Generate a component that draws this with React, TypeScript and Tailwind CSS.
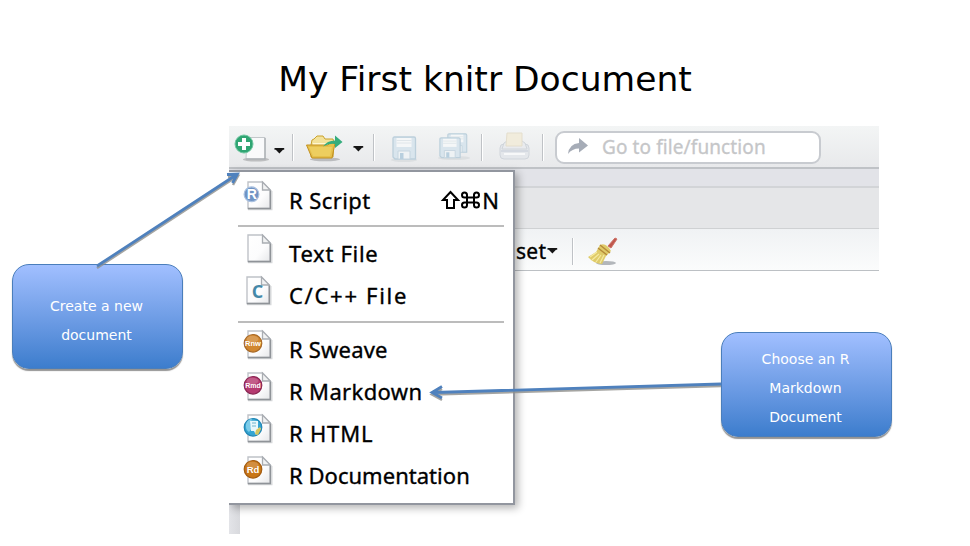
import type { ReactNode } from "react";

type DocKind = "script" | "text" | "c" | "sweave" | "markdown" | "html" | "rd";

function Caret({ className = "" }: { className?: string }) {
  return (
    <svg className={className} width="11" height="8" viewBox="0 0 11 8">
      <path d="M.5 1h9.700v1.800H9L5.400 6.600 1.800 2.800H.5z" fill="#151515" />
    </svg>
  );
}

const badges: Record<DocKind, { fill: string; edge: string; label: string; size: number } | null> = {
  script: { fill: "#6f93c4", edge: "#a9c0df", label: "R", size: 14 },
  text: null,
  c: null,
  sweave: { fill: "#d18730", edge: "#a86a28", label: "Rnw", size: 7.5 },
  markdown: { fill: "#b53a70", edge: "#8b2854", label: "Rmd", size: 7 },
  html: { fill: "#35a5d2", edge: "#2387b5", label: "", size: 9 },
  rd: { fill: "#c97616", edge: "#a45d12", label: "Rd", size: 9.5 },
};

function DocIcon({ kind }: { kind: DocKind }) {
  const b = badges[kind];
  const small = kind === "script";
  return (
    <svg width="32" height="32" viewBox="0 0 32 32" className={kind === "c" ? "-ml-px mr-px" : ""}>
      <defs>
        <linearGradient id="paper" x1="0" y1="0" x2="1" y2="1">
          <stop offset="0" stopColor="#fff" />
          <stop offset=".6" stopColor="#fcfcfd" />
          <stop offset="1" stopColor="#e6e7e9" />
        </linearGradient>
      </defs>
      <path d="M6 29.300h23.500V11" fill="none" stroke="#d6d8da" strokeWidth="2" />
      <path d="M6 2h14.500L28.300 10v18.500H6z" fill="url(#paper)" stroke="#bfc2c8" strokeWidth="1.4" />
      <path d="M6 28.500h22.300V10" fill="none" stroke="#8f9398" strokeWidth="1.4" />
      <path d="M20.500 2v8h7.800z" fill="#f1f2f3" stroke="#a9adb2" strokeWidth="1.3" />
      {b && (
        <>
          <circle cx={small ? 9.5 : 11} cy="14.3" r={small ? 7.4 : 8.8} fill={b.fill} stroke={b.edge} strokeWidth="1.2" />
          {!small && <ellipse cx="10.5" cy="10" rx="6" ry="3.2" fill="#fff" opacity=".18" />}
          <text
            x={small ? 9.8 : 11}
            y={small ? 19.2 : 14.3 + b.size * 0.36}
            textAnchor="middle"
            fontSize={b.size}
            fontWeight="700"
            fill="#fff"
            fontFamily="Liberation Sans, sans-serif"
          >
            {b.label}
          </text>
        </>
      )}
      {kind === "c" && (
        <text x="16.500" y="22.5" textAnchor="middle" fontSize="18" fontWeight="700" fill="#4589a9" fontFamily="Open Sans, sans-serif">
          C
        </text>
      )}
      {kind === "html" && (
        <>
          <path d="M4 11q2-5 6-5l-2 5 2 4-3 4q-4-3-3-8z" fill="#7dcce9" />
          <path d="M8 8h8v7h3l-5 7-2-4H9z" fill="#e8f7fb" />
          <path d="M10 10h4M10 13h4" stroke="#6eb4ce" />
          <path d="m14 17 4-3 1 2-3 6-3-1z" fill="#d5c65f" />
        </>
      )}
    </svg>
  );
}

function NewIcon() {
  return (
    <svg width="36" height="32" viewBox="0 0 36 32">
      <ellipse cx="22" cy="27.500" rx="13" ry="2" fill="#a9abad" opacity=".7" />
      <path d="M13 5.5h18v21.3H12z" fill="#f9fafb" stroke="#c3c7ca" />
      <path d="M12 27h19V6" fill="none" stroke="#a4a9ad" strokeWidth="1.2" />
      <circle cx="10" cy="12" r="9" fill="#30a573" stroke="#71c7a2" />
      <path d="M10 6v12M4 12h12" stroke="#fff" strokeWidth="4" />
    </svg>
  );
}

function OpenIcon() {
  return (
    <svg width="40" height="32" viewBox="0 0 40 32">
      <ellipse cx="20" cy="27.3" rx="15" ry="2" fill="#9b9da0" opacity=".6" />
      <path d="m6 13 1-5 2-1 3-3h6l2 3h8l1 4-1 14H6z" fill="#f3e29a" stroke="#caa22c" />
      <path d="M8 12h18" stroke="#fff8d0" strokeWidth="2" />
      <path d="M1.5 13H23l2-2h5l-3 15H7z" fill="#e5c04b" stroke="#c39122" />
      <path d="M4 15h23l-2 9H8z" fill="#f2d76d" opacity=".6" />
      <path d="M18 14.500q4-6 12-6V3.500l7.500 6.500-7.500 6v-4q-6-1-12 2.500z" fill="#35ad7d" />
    </svg>
  );
}

function DiskShape() {
  return (
    <>
      <path d="M1 2.500Q1 1 2.500 1H22q1.500 0 1.500 1.500V23H3l-2-2z" fill="#d9e5ed" stroke="#bccfdb" strokeWidth="1.3" />
      <path d="M4.500 2h15v9h-15z" fill="#f5f7f8" />
      <path d="M4.500 4.500h15M4.500 7h15" stroke="#e0e6ea" />
      <path d="M6 15h12v8H6z" fill="#eef2f4" stroke="#c6d5df" />
      <path d="M8 17h3.500v6H8z" fill="#b8cfde" />
    </>
  );
}

function SaveIcon() {
  return (
    <svg width="28" height="28" viewBox="0 0 28 28">
      <ellipse cx="13" cy="25" rx="13" ry="2" fill="#dcdfe1" />
      <g transform="translate(1 1)"><DiskShape /></g>
    </svg>
  );
}

function SaveAllIcon() {
  return (
    <svg width="33" height="30" viewBox="0 0 33 30">
      <ellipse cx="16" cy="26" rx="16" ry="2" fill="#dcdfe1" />
      <g transform="translate(9 1) scale(.84)"><DiskShape /></g>
      <g transform="translate(1 5) scale(.9)"><DiskShape /></g>
    </svg>
  );
}

function PrintIcon() {
  return (
    <svg width="31" height="30" viewBox="0 0 31 30">
      <rect x="1" y="12" width="29" height="15" rx="4" fill="#e4e7eb" stroke="#d0d5db" />
      <path d="m5 11 3-2h15l3 2 2 6H3z" fill="#e9ebee" stroke="#d0d5da" />
      <path d="M8 1h15v13H7z" fill="#f1ecdc" stroke="#e4decd" />
      <path d="M2 19h27" stroke="#cfd4de" strokeWidth="1.5" />
      <path d="M5 22h21" stroke="#f7f8f9" strokeWidth="2" />
    </svg>
  );
}

function BroomIcon() {
  return (
    <svg width="32" height="31" viewBox="0 0 32 31">
      <ellipse cx="19" cy="27" rx="10" ry="2" fill="#969a9f" opacity=".7" />
      <path d="m21 10 7-8 2 1-6 9z" fill="#bf574d" stroke="#ce7268" />
      <path d="M13 9q6-3 11 6l-5 5-4 8q-8 0-14-7l8-5z" fill="#dfcb69" />
      <path d="m13 9 10 8M11 12l9 7" stroke="#b58a39" strokeWidth="1.5" />
      <path d="m10 16-7 5m9-3-7 6m9-5-5 7m8-7-4 8" stroke="#f5eaa1" strokeWidth="1.200" />
    </svg>
  );
}

function Separator({ className = "" }: { className?: string }) {
  return <div className={`h-[27px] w-[2px] shrink-0 border-r border-white bg-[#bfc2c6] ${className}`} />;
}

function MenuItem({ kind, children, tracking, shortcut }: { kind: DocKind; children: ReactNode; tracking: string; shortcut?: boolean }) {
  return (
    <div className="flex h-[42.3px] items-center pl-[13px]">
      <div className="-mt-[11px] h-8 w-8 shrink-0"><DocIcon kind={kind} /></div>
      <span className={`-mt-[3px] ml-[15px] whitespace-nowrap text-[22px] leading-none [-webkit-text-stroke:0.35px_black] ${tracking}`}>{children}</span>
      {shortcut && (
        <span className="-mt-[3px] ml-auto flex items-center pr-[14px] text-[22px] leading-none [-webkit-text-stroke:0.35px_black]">
          <svg width="21" height="20" viewBox="0 0 21 20">
            <path d="M10.500 2 18 10h-4v8H7v-8H3z" fill="none" stroke="#000" strokeWidth="2" />
          </svg>
          <svg width="19" height="20" viewBox="0 0 19 20" className="mr-[2px]">
            <path d="M6 7v8a2.500 2.500 0 1 1-2.500-2.500h12A2.500 2.500 0 1 1 13 15V5a2.500 2.500 0 1 1 2.500 2.500h-12A2.500 2.500 0 1 1 6 5z" fill="none" stroke="#000" strokeWidth="2" />
          </svg>
          <span>N</span>
        </span>
      )}
    </div>
  );
}

function Callout({ lines, className }: { lines: string[]; className: string }) {
  return (
    <div className={`absolute flex h-[105px] w-[171px] flex-col items-center rounded-[17px] border border-[#4a7ebb] bg-linear-to-b from-[#a1bfff] to-[#3c7dcd] pr-[2px] text-[14px] leading-[29px] text-white shadow-[0_2px_1px_rgba(90,90,90,0.65)] ${className}`}>
      {lines.map((line) => <span key={line}>{line}</span>)}
    </div>
  );
}

export default function App() {
  return (
    <main className="relative h-[546px] w-[970px] overflow-hidden bg-white font-['DejaVu_Sans',sans-serif]">
      <h1 className="pt-[58px] text-center text-[34.5px] leading-[42px] text-black">My First knitr Document</h1>
      <section className="relative ml-[229px] mt-[26px] flex h-[408px] w-[650px] flex-col overflow-hidden font-['Noto_Sans',sans-serif] text-black">
        <div className="flex h-[43px] shrink-0 items-center border-b-2 border-[#bfc2c6] bg-linear-to-b from-[#f3f5f5] to-[#e8e9eb] pl-[5px] pt-px">
          <div className="mt-px"><NewIcon /></div>
          <Caret className="ml-[4px] mt-[7px]" />
          <Separator className="ml-[7px]" />
          <div className="ml-[11px] mt-px"><OpenIcon /></div>
          <Caret className="ml-[8px] mt-[4px]" />
          <Separator className="ml-[9px]" />
          <div className="ml-[16px] mt-[3px]"><SaveIcon /></div>
          <div className="ml-[19px]"><SaveAllIcon /></div>
          <Separator className="ml-[10px]" />
          <div className="ml-[16px]"><PrintIcon /></div>
          <Separator className="ml-[12px]" />
          <div className="ml-[11px] flex h-[33px] w-[266px] shrink-0 items-center rounded-[9px] border-2 border-[#c8cbd0] bg-white pl-[10px]">
            <svg width="22" height="20" viewBox="0 0 22 20">
              <path d="M1 17q1-10 11-11V1l9 7.500-9 7v-4q-7 0-11 5.500z" fill="#a6acb7" />
            </svg>
            <span className="ml-[13px] whitespace-nowrap text-[19px] leading-none tracking-[0.1px] text-[#c5c6c8] [-webkit-text-stroke:0.3px_#c5c6c8]">Go to file/function</span>
          </div>
        </div>
        <div className="h-[19px] shrink-0 border-b-2 border-[#d2d4d7] bg-[#e2e3e8]" />
        <div className="h-[41px] shrink-0 border-b border-[#cfd1d3] bg-[#e5e6e8]" />
        <div className="flex h-[42px] shrink-0 items-center border-b-[1.500px] border-[#bcc0c4] bg-linear-to-b from-[#f0f2f4] to-[#fbfcfc] pl-[281px] pt-[3px]">
          <span className="whitespace-nowrap text-[21px] leading-none tracking-[0.3px] [-webkit-text-stroke:0.35px_black]">.set</span>
          <Caret className="ml-px" />
          <Separator className="ml-[14px]" />
          <div className="ml-[13px]"><BroomIcon /></div>
        </div>
        <div className="w-[11px] grow bg-linear-to-r from-[#e3e4e8] to-[#d8d9dd]" />
        <div className="absolute left-0 top-[44px] flex h-[335px] w-[286px] flex-col border-b-2 border-r-2 border-t-2 border-[#92969f] bg-white pt-[8px] shadow-[3px_3px_8px_rgba(0,0,0,0.3)]">
          <MenuItem kind="script" tracking="tracking-[0.4px]" shortcut>R Script</MenuItem>
          <div className="mb-[6px] ml-[9px] mr-[9px] mt-[3px] h-[2px] shrink-0 bg-[#bcbcbc]" />
          <MenuItem kind="text" tracking="tracking-[0.7px]">Text File</MenuItem>
          <MenuItem kind="c" tracking="tracking-[1.7px]">C/C++ File</MenuItem>
          <div className="mb-[6px] ml-[9px] mr-[9px] mt-[3px] h-[2px] shrink-0 bg-[#bcbcbc]" />
          <MenuItem kind="sweave" tracking="tracking-[0.2px]">R Sweave</MenuItem>
          <MenuItem kind="markdown" tracking="tracking-[0.35px]">R Markdown</MenuItem>
          <MenuItem kind="html" tracking="tracking-[0.8px]">R HTML</MenuItem>
          <MenuItem kind="rd" tracking="tracking-[0.03px]">R Documentation</MenuItem>
        </div>
      </section>
      <Callout className="left-[12px] top-[264px] pt-[27px]" lines={["Create a new", "document"]} />
      <Callout className="left-[721px] top-[332px] pt-[12px]" lines={["Choose an R", "Markdown", "Document"]} />
      <svg className="pointer-events-none absolute left-0 top-0" width="970" height="546" viewBox="0 0 970 546" fill="none">
        <g stroke="#8f8f8b" strokeWidth="2.500" transform="translate(0 2)" opacity=".8">
          <path d="M97 266 236 175M228 175l10-1-5 9M721 384 434 392.500M442 387l-10 5.500 10 5.500" />
        </g>
        <g stroke="#4f81bd" strokeWidth="2.800">
          <path d="M97 266 236 175M227 174.500l10.500-.5-5 9M721 384 434 392.500M442 386.500l-10 6 10 5.500" />
        </g>
      </svg>
    </main>
  );
}
